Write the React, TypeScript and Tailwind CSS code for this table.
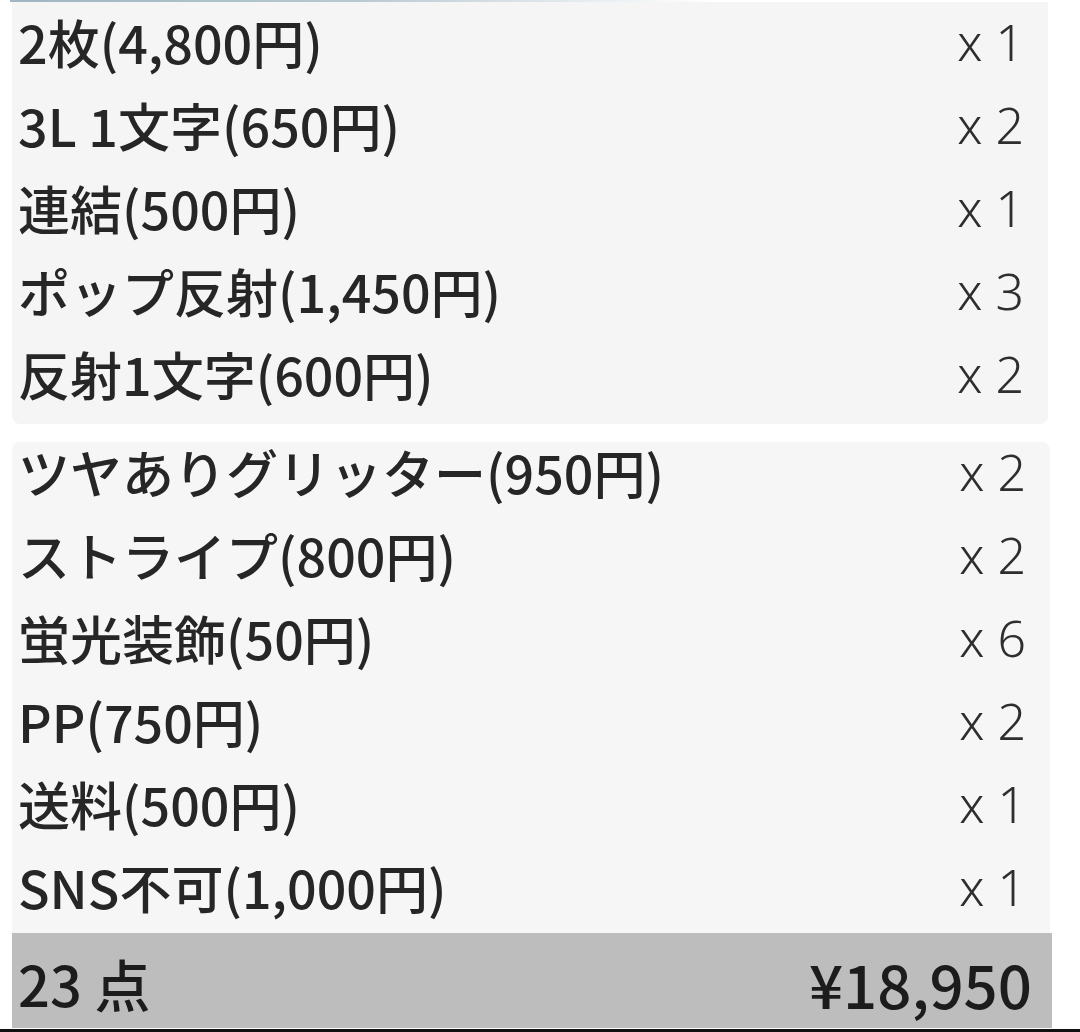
const FIRST = [
  { name: "2枚(4,800円)", qty: 1 },
  { name: "3L 1文字(650円)", qty: 2 },
  { name: "連結(500円)", qty: 1 },
  { name: "ポップ反射(1,450円)", qty: 3 },
  { name: "反射1文字(600円)", qty: 2 },
];

const SECOND = [
  { name: "ツヤありグリッター(950円)", qty: 2 },
  { name: "ストライプ(800円)", qty: 2 },
  { name: "蛍光装飾(50円)", qty: 6 },
  { name: "PP(750円)", qty: 2 },
  { name: "送料(500円)", qty: 1 },
  { name: "SNS不可(1,000円)", qty: 1 },
];

const jp = { fontFamily: '"Noto Sans CJK JP", "Noto Sans", sans-serif' };
const latin = { fontFamily: '"Noto Sans", "Open Sans", sans-serif' };

function Row({ name, qty }: { name: string; qty: number }) {
  return (
    <div className="flex h-[83px] items-center justify-between pl-[6px] pr-[24px]">
      <span style={jp} className="text-[52px] font-medium leading-none text-[#262626]">
        {name}
      </span>
      <span style={latin} className="text-[50px] font-light leading-none text-[#2e2e2e]">
        x {qty}
      </span>
    </div>
  );
}

export default function App() {
  return (
    <div className="relative h-[1032px] w-[1080px] overflow-hidden bg-white">
      <div className="ml-[10px] h-[2px] w-[700px] bg-gradient-to-r from-[#9fb6c2] via-[#b9c9d2] to-transparent" />

      <div className="ml-[12px] flex w-[1036px] flex-col rounded-b-lg bg-[#f5f5f5] pb-[9px]">
        <div className="-mt-[2px]">
          {FIRST.map((it) => (
            <Row key={it.name} {...it} />
          ))}
        </div>
      </div>

      {/* second card: rows sit a bit high against the card top */}
      <div className="ml-[12px] mt-[18px] flex w-[1038px] flex-col rounded-t-lg bg-[#f6f6f6] pb-[5px]">
        <div className="-mt-[12px]">
          {SECOND.map((it) => (
            <Row key={it.name} {...it} />
          ))}
        </div>
      </div>

      <div className="ml-[12px] flex h-[95px] w-[1040px] items-center justify-between bg-[#bdbdbd] pl-[6px] pr-[20px] pt-[4px]">
        <span style={jp} className="text-[56px] font-medium leading-none text-[#1c1c1c]">
          23 点
        </span>
        <span style={jp} className="text-[60px] font-medium leading-none text-[#1c1c1c]">
          ¥18,950
        </span>
      </div>

      <div className="absolute bottom-0 left-0 h-[3px] w-full bg-[#111]" />
    </div>
  );
}
